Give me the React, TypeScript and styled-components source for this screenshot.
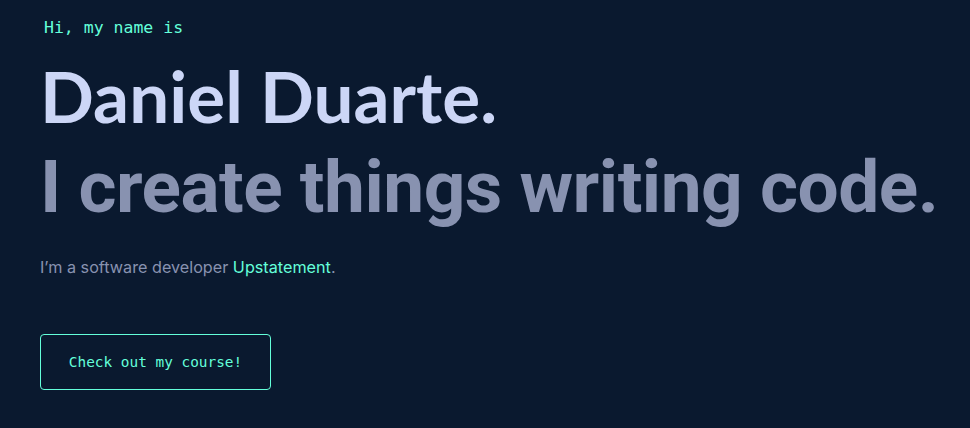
import React from "react";
import styled, { createGlobalStyle } from "styled-components";

const Global = createGlobalStyle`
  html, body { margin: 0; padding: 0; background: #0a192f; }
  body { font-family: Inter, "Noto Sans", sans-serif; -webkit-font-smoothing: antialiased; }
  * { box-sizing: border-box; }
`;

const Hero = styled.section`
  display: flex;
  flex-direction: column;
  align-items: flex-start;
  min-height: 428px;
  padding: 18px 0 0 40px;
  background: #0a192f;
`;

const Intro = styled.h1`
  margin: 0 0 15px 4px;
  color: #64ffda;
  font-family: "DejaVu Sans Mono", monospace;
  font-size: 16.5px;
  font-weight: 400;
  line-height: 20px;
`;

const BigHeading = styled.h2<{ $slate?: boolean }>`
  margin: ${(p) => (p.$slate ? "8px 0 0" : "0")};
  white-space: nowrap;
  font-family: ${(p) => (p.$slate ? 'Roboto, "Liberation Sans", sans-serif' : 'Lato, Inter, sans-serif')};
  font-size: ${(p) => (p.$slate ? "73px" : "71px")};
  letter-spacing: ${(p) => (p.$slate ? "-0.5px" : "0")};
  font-weight: 700;
  line-height: ${(p) => (p.$slate ? "80px" : "86px")};
  color: ${(p) => (p.$slate ? "#8892b0" : "#ccd6f6")};
`;

const Blurb = styled.p`
  margin: 28px 0 0;
  color: #8892b0;
  font-family: Inter, sans-serif;
  font-size: 16.2px;
  line-height: 24px;
`;

const Link = styled.a`
  color: #64ffda;
  text-decoration: none;
`;

const Button = styled.a`
  margin-top: 55px;
  display: inline-flex;
  align-items: center;
  justify-content: center;
  width: 231px;
  height: 56px;
  border: 1px solid #64ffda;
  border-radius: 4px;
  color: #64ffda;
  font-family: "DejaVu Sans Mono", monospace;
  font-size: 14.4px;
  text-decoration: none;
`;

export default function App() {
  return (
    <>
      <Global />
      <Hero>
        <Intro>Hi, my name is</Intro>
        <BigHeading>Daniel Duarte.</BigHeading>
        <BigHeading as="h3" $slate>I create things writing code.</BigHeading>
        <Blurb>
          I’m a software developer <Link href="#">Upstatement</Link>.
        </Blurb>
        <Button href="#">Check out my course!</Button>
      </Hero>
    </>
  );
}
